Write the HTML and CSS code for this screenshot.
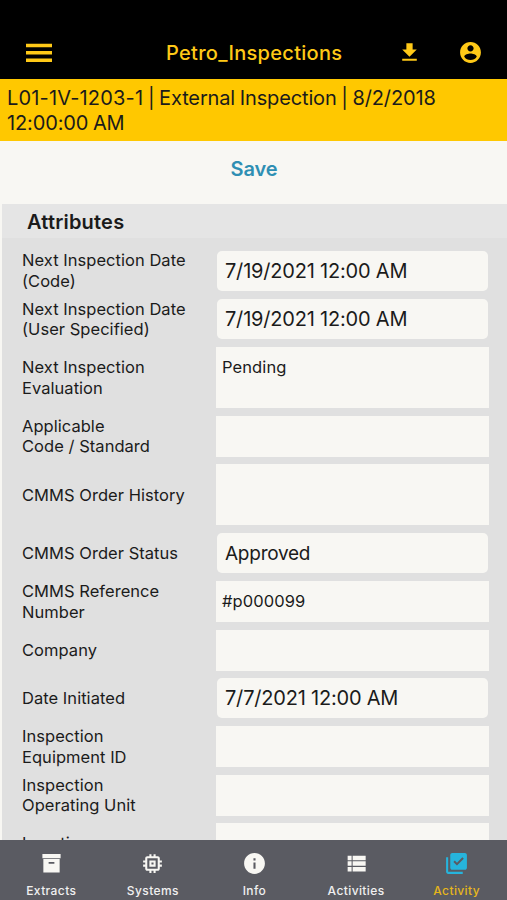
FILE: index.html
```html
<!DOCTYPE html>
<html lang="en">
<head>
<meta charset="utf-8">
<title>Petro_Inspections</title>
<link rel="stylesheet" href="styles.css">
</head>
<body>
<div class="app">
  <header class="topbar">
    <svg class="menu" viewBox="0 0 26 20"><path d="M0 .8h26v3.500H0zM0 8.100h26v3.500H0zM0 15.400h26v3.500H0z"/></svg>
    <h1 class="title">Petro_Inspections</h1>
    <svg class="download" viewBox="0 0 24 24"><path d="M19 9h-4V3H9v6H5l7 7 7-7zM5 18v2h14v-2H5z"/></svg>
    <svg class="account" viewBox="0 0 24 24"><path d="M12 2C6.48 2 2 6.48 2 12s4.48 10 10 10 10-4.48 10-10S17.52 2 12 2zm0 3c1.66 0 3 1.34 3 3s-1.34 3-3 3-3-1.34-3-3 1.34-3 3-3zm0 14.2c-2.500 0-4.710-1.280-6-3.220.03-1.990 4-3.080 6-3.080 1.990 0 5.970 1.090 6 3.080-1.290 1.940-3.500 3.220-6 3.220z"/></svg>
  </header>
  <div class="banner"><span class="code">L01-1V-1203-1</span> | External Inspection | 8/2/2018<br>12:00:00 AM</div>
  <div class="actions"><span class="save">Save</span></div>
  <main class="form">
    <h2 class="section">Attributes</h2>
    <div class="rows">
      <div class="row"><div class="label">Next Inspection Date<br>(Code)</div><div class="field picker">7/19/2021 12:00 AM</div></div>
      <div class="row"><div class="label">Next Inspection Date<br>(User Specified)</div><div class="field picker">7/19/2021 12:00 AM</div></div>
      <div class="row tall"><div class="label">Next Inspection<br>Evaluation</div><div class="field">Pending</div></div>
      <div class="row"><div class="label">Applicable<br>Code / Standard</div><div class="field"></div></div>
      <div class="row tall"><div class="label">CMMS Order History</div><div class="field"></div></div>
      <div class="row"><div class="label">CMMS Order Status</div><div class="field picker choice">Approved</div></div>
      <div class="row"><div class="label">CMMS Reference<br>Number</div><div class="field">#p000099</div></div>
      <div class="row"><div class="label">Company</div><div class="field"></div></div>
      <div class="row"><div class="label">Date Initiated</div><div class="field picker">7/7/2021 12:00 AM</div></div>
      <div class="row"><div class="label">Inspection<br>Equipment ID</div><div class="field"></div></div>
      <div class="row"><div class="label">Inspection<br>Operating Unit</div><div class="field"></div></div>
      <div class="row"><div class="label">Location</div><div class="field"></div></div>
    </div>
  </main>
  <nav class="tabs">
    <div class="tab"><svg viewBox="0 0 24 24"><path fill-rule="evenodd" d="M2.500 2h19v4.500h-19zM3.500 7.300h17v14.200h-17zM9 10.500v1.800h6v-1.800z"/></svg><span>Extracts</span></div>
    <div class="tab"><svg viewBox="0 0 24 24"><path fill-rule="evenodd" d="M15 9H9v6h6V9zm-2 4h-2v-2h2v2zm8-2V9h-2V7c0-1.100-.9-2-2-2h-2V3h-2v2h-2V3H9v2H7c-1.100 0-2 .9-2 2v2H3v2h2v2H3v2h2v2c0 1.100.9 2 2 2h2v2h2v-2h2v2h2v-2h2c1.100 0 2-.9 2-2v-2h2v-2h-2v-2h2zm-4 6H7V7h10v10z"/></svg><span>Systems</span></div>
    <div class="tab"><svg viewBox="0 0 24 24"><path d="M12 2C6.480 2 2 6.480 2 12s4.480 10 10 10 10-4.480 10-10S17.520 2 12 2zm1 15h-2v-6h2v6zm0-8h-2V7h2v2z"/></svg><span>Info</span></div>
    <div class="tab"><svg viewBox="0 0 24 24"><path d="M3.500 4.500h3.800v4.300H3.500zM8.300 4.500h12.500v4.300H8.300zM3.500 9.900h3.800v4.300H3.500zM8.300 9.900h12.500v4.300H8.300zM3.500 15.300h3.800v4.300H3.500zM8.300 15.300h12.500v4.300H8.300z"/></svg><span>Activities</span></div>
    <div class="tab active"><svg viewBox="0 0 24 24"><path d="M20 2H8c-1.100 0-2 .9-2 2v12c0 1.100.9 2 2 2h12c1.100 0 2-.9 2-2V4c0-1.100-.9-2-2-2zm-7.530 12L9 10.500l1.400-1.410 2.070 2.080L17.600 6 19 7.410 12.470 14zM4 6H2v14c0 1.100.9 2 2 2h14v-2H4V6z"/></svg><span>Activity</span></div>
  </nav>
</div>
</body>
</html>
```
FILE: styles.css
```css
* { box-sizing: border-box; }
body { margin: 0; font-family: Inter, "Liberation Sans", sans-serif; color: #1b1b1b; }
.app { display: flex; flex-direction: column; width: 507px; height: 900px; overflow: hidden; background: #f8f7f3; }
.topbar { display: flex; align-items: center; flex: none; height: 79px; padding: 26px 24px 0 26px; background: #000; color: #ffc917; }
.topbar svg { flex: none; fill: #ffc917; }
.menu { width: 26px; height: 20px; }
.title { flex: none; width: 176px; margin: 0 0 0 114px; font-size: 20px; font-weight: 500; line-height: 26px; letter-spacing: .3px; white-space: nowrap; }
.download { width: 25px; height: 25px; margin-left: 54.500px; }
.account { width: 25px; height: 25px; margin-left: auto; }
.banner { flex: none; height: 61.500px; padding: 7px 7px 0; background: #ffc800; font-size: 20px; line-height: 24.5px; letter-spacing: -.14px; word-spacing: -.8px; white-space: nowrap; }
.code { letter-spacing: .17px; }
.actions { flex: none; height: 63px; padding: 16px 0 0 1px; text-align: center; }
.save { font-size: 20px; font-weight: 600; line-height: 25px; letter-spacing: -.1px; color: #2f8fb3; }
.form { flex: 1; min-height: 0; margin-left: 2px; overflow: hidden; background: #e0e0e0; }
.section { height: 34px; margin: 0; padding: 6px 25px 0; background: #e5e5e5; font-size: 20px; font-weight: 600; line-height: 25px; letter-spacing: .2px; }
.rows { padding: 9px 18px 0 20px; }
.row { display: flex; align-items: center; height: 48.400px; }
.row.tall { height: 68.700px; }
.label { flex: none; width: 194px; font-size: 16.500px; line-height: 20.400px; letter-spacing: .04px; white-space: nowrap; }
.field { flex: 1; height: 41px; padding: 10px 6px; background: #f8f7f3; font-size: 16.500px; line-height: 20.400px; letter-spacing: .1px; white-space: nowrap; }
.tall .field { height: 61px; }
.picker { height: 40px; margin: 0 1px; padding: 0 8px; border-radius: 5px; font-size: 20px; line-height: 41px; letter-spacing: -.2px; }
.choice { font-size: 19px; letter-spacing: -.25px; }
.tabs { display: flex; flex: none; height: 60px; background: #5a5b62; color: #f0f0f0; }
.tab { display: flex; flex: 1; flex-direction: column; align-items: center; padding: 11px 0 0 1px; font-size: 12px; font-weight: 500; line-height: 16px; letter-spacing: .4px; }
.tab svg { width: 25px; height: 25px; margin-bottom: 7px; fill: #f8f7f3; }
.tab:first-child svg { width: 23px; height: 23px; margin: 1px 0 8px; }
.tab.active { padding-left: 0; color: #e6b61c; }
.tab.active svg { fill: #26b4dc; }
```
